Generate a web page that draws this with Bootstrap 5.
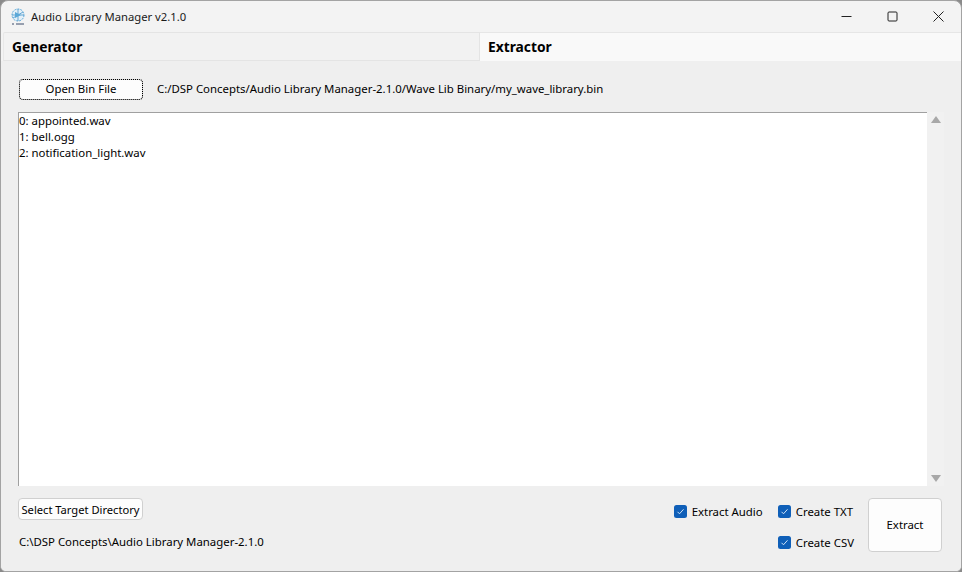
<!DOCTYPE html>
<html lang="en"><head><meta charset="utf-8"><title>Audio Library Manager v2.1.0</title>
<link rel="stylesheet" href="https://cdn.jsdelivr.net/npm/bootstrap@5.3.0/dist/css/bootstrap.min.css">
<style>
html,body{height:572px;width:962px;overflow:hidden;background:#8a8a8a;}
body{font-family:"Noto Sans","Open Sans",sans-serif;font-size:12px;color:#000;line-height:16px;}
.appwin{width:962px;height:572px;background:#f3f3f3;border:1px solid #a3a3a3;border-radius:8px 8px 6px 6px;overflow:hidden;display:flex;flex-direction:column;}
.titlebar{height:31px;flex:none;padding-left:9px;}
.wintitle{margin-left:5px;font-size:11.25px;color:#1a1a1a;}
.winctl{width:46px;height:31px;display:flex;align-items:center;justify-content:center;}
.tabstrip{height:29px;flex:none;margin-left:2px;}
.tabcell{font-weight:700;font-size:13.8px;line-height:28px;padding-left:9px;}
.tabcell.off{width:477px;background:#f2f2f2;border:1px solid #e4e4e4;border-left-color:#e8e8e8;border-right:1px solid #e4e4e4;border-radius:2px 0 0 0;padding-left:8px;}
.tabcell.on{flex:1;background:#f9f9f9;border-top:1px solid #e6e6e6;padding-left:8px;}
.panebody{flex:1;background:#efefef;padding:18px 0 0 17px;margin-left:0;min-height:0;}
.toprow{height:20px;}
.winbtn{background:#fdfdfd;border:1px solid #d0d0d0;border-radius:4px;color:#000;font-size:11.4px;padding:0;line-height:16px;}
.btnopen{width:124px;height:21px;margin-left:1px;outline:1px dotted #000;outline-offset:-1px;}
.pathtxt{margin-left:14px;font-size:11.4px;}
.listrow{margin-top:13px;height:374px;}
.listbox{width:909px;background:#fff;border-top:1px solid #a0a0a0;border-left:1px solid #a0a0a0;padding:0;font-size:11.4px;}
.scrollbar-col{width:17px;background:#f1f1f1;padding:4px 0;}
.tri-u{width:0;height:0;border-left:5px solid transparent;border-right:5px solid transparent;border-bottom:7px solid #a8a8a8;}
.tri-d{width:0;height:0;border-left:5px solid transparent;border-right:5px solid transparent;border-top:7px solid #a8a8a8;}
.footrow{margin-top:12px;padding-right:19px;}
.btnsel{width:125px;height:22px;padding-top:1px;font-size:11.15px;}
.dirtxt{margin-top:14px;font-size:11.4px;padding-left:1px;}
.chkitem{display:flex;align-items:center;gap:5px;font-size:11.4px;height:22px;}
.chkbox{width:13px;height:13px;border-radius:2.5px;background:#0f5fb8;display:flex;align-items:center;justify-content:center;}
.chkcols{gap:15px;margin-top:2.5px;}
.chkstack{gap:9px;}
.btnextract{width:74px;height:54px;margin-left:14px;}
</style></head><body>
<div class="appwin">
 <div class="titlebar d-flex align-items-center">
  <svg width="16" height="18" viewBox="0 0 16 18"><circle cx="8" cy="7" r="6" fill="#e4f0f8" stroke="#5aa8d8" stroke-width="1" stroke-dasharray="2 1"/><path d="M2 7h12M8 1v12M3 10l10-6" stroke="#2f86c4" stroke-width=".7"/><path d="M5 4l6 3-6 3z" fill="#5aa8d8"/><path d="M2 16h2M6 16h8" stroke="#3a4a6a" stroke-width="1"/></svg>
  <span class="wintitle">Audio Library Manager v2.1.0</span>
  <div class="ms-auto d-flex">
   <div class="winctl"><svg width="11" height="11" viewBox="0 0 11 11"><path d="M0.5 5.5h10" stroke="#222"/></svg></div>
   <div class="winctl"><svg width="11" height="11" viewBox="0 0 11 11"><rect x="1" y="1" width="9" height="9" rx="1" fill="none" stroke="#222"/></svg></div>
   <div class="winctl"><svg width="11" height="11" viewBox="0 0 11 11"><path d="M.5.5l10 10M10.5.5l-10 10" stroke="#222"/></svg></div>
  </div>
 </div>
 <div class="tabstrip d-flex">
  <div class="tabcell off">Generator</div>
  <div class="tabcell on">Extractor</div>
 </div>
 <div class="panebody d-flex flex-column">
  <div class="toprow d-flex align-items-center">
   <button class="btn winbtn btnopen">Open Bin File</button>
   <span class="pathtxt">C:/DSP Concepts/Audio Library Manager-2.1.0/Wave Lib Binary/my_wave_library.bin</span>
  </div>
  <div class="listrow d-flex">
   <div class="listbox"><div>0: appointed.wav</div><div>1: bell.ogg</div><div>2: notification_light.wav</div></div>
   <div class="scrollbar-col d-flex flex-column align-items-center justify-content-between"><div class="tri-u"></div><div class="tri-d"></div></div>
  </div>
  <div class="footrow d-flex">
   <div>
    <button class="btn winbtn btnsel">Select Target Directory</button>
    <div class="dirtxt">C:\DSP Concepts\Audio Library Manager-2.1.0</div>
   </div>
   <div class="ms-auto d-flex chkcols">
    <div class="chkitem"><span class="chkbox"><svg width="9" height="9" viewBox="0 0 9 9"><path d="M1.5 4.8l2 2 4-4.5" fill="none" stroke="#cfe3f7" stroke-width="1"/></svg></span>Extract Audio</div>
    <div class="d-flex flex-column chkstack">
     <div class="chkitem"><span class="chkbox"><svg width="9" height="9" viewBox="0 0 9 9"><path d="M1.5 4.8l2 2 4-4.5" fill="none" stroke="#cfe3f7" stroke-width="1"/></svg></span>Create TXT</div>
     <div class="chkitem"><span class="chkbox"><svg width="9" height="9" viewBox="0 0 9 9"><path d="M1.5 4.8l2 2 4-4.5" fill="none" stroke="#cfe3f7" stroke-width="1"/></svg></span>Create CSV</div>
    </div>
   </div>
   <button class="btn winbtn btnextract">Extract</button>
  </div>
 </div>
</div>
</body></html>
